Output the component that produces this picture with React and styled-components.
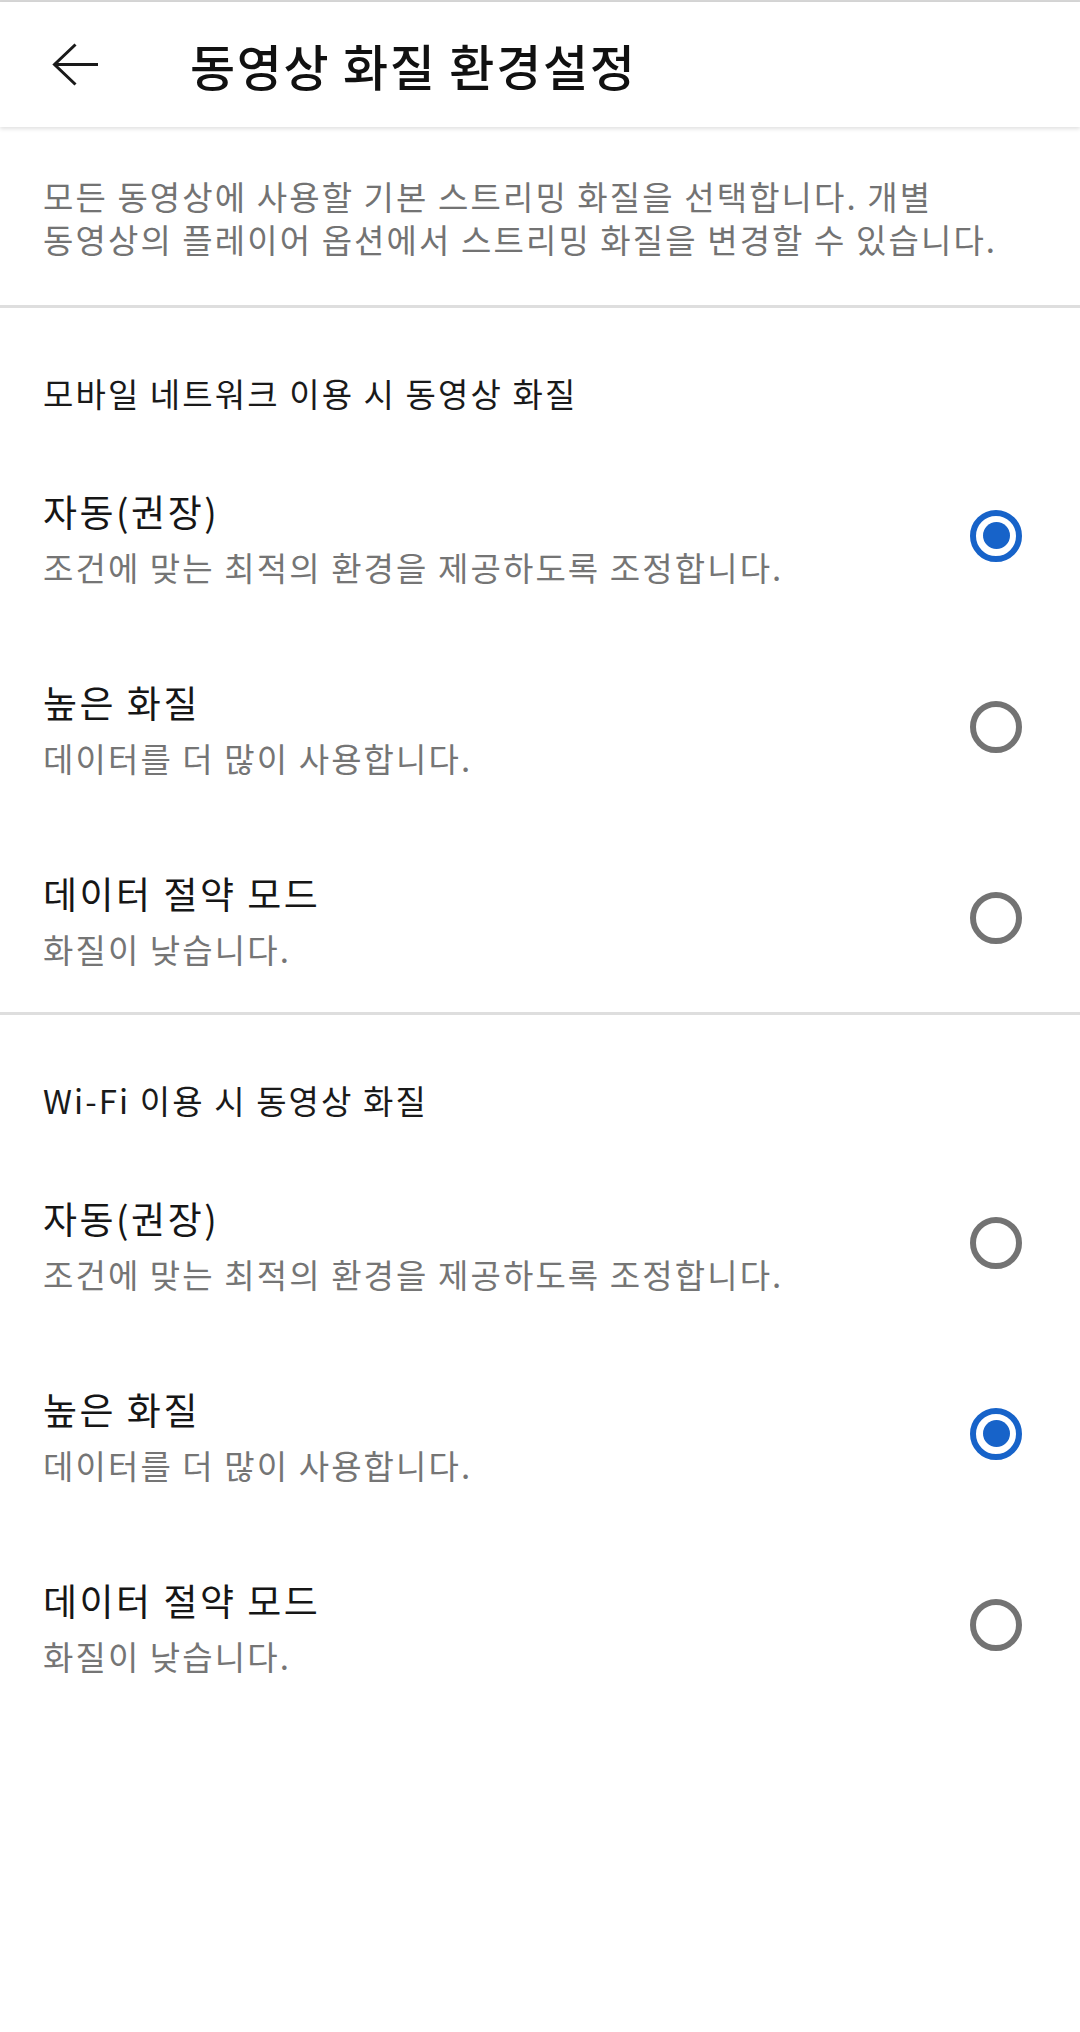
import React from "react";
import styled, { createGlobalStyle } from "styled-components";

const GlobalStyle = createGlobalStyle`
  html, body {
    margin: 0;
    padding: 0;
    background: #ffffff;
  }
  body {
    font-family: "Noto Sans CJK KR", "Noto Sans", sans-serif;
    color: #212121;
    word-break: keep-all;
    -webkit-font-smoothing: antialiased;
  }
  * { box-sizing: border-box; }
`;

const Page = styled.div`
  width: 1080px;
  min-height: 2032px;
  background: #ffffff;
  border-top: 2px solid #d6d6d6;
`;

const Header = styled.header`
  position: relative;
  z-index: 1;
  height: 125px;
  display: flex;
  align-items: center;
  background: #ffffff;
  box-shadow: 0 2px 4px rgba(0, 0, 0, 0.12);
`;

const BackButton = styled.button`
  width: 190px;
  height: 100%;
  border: 0;
  background: none;
  padding: 0 0 0 52px;
  display: flex;
  align-items: center;
  cursor: pointer;
`;

const Title = styled.h1`
  margin: 0;
  font-size: 49px;
  font-weight: 500;
  line-height: 60px;
  color: #111111;
  letter-spacing: 1.7px;
`;

const Description = styled.p`
  margin: 0;
  padding: 48px 40px 44px 43px;
  font-size: 33px;
  line-height: 43px;
  color: #737373;
  letter-spacing: 2.1px;
  word-break: keep-all;
`;

const Divider = styled.div`
  height: 3px;
  background: #dedede;
`;

const SectionTitle = styled.h2`
  margin: 0;
  height: 131px;
  padding: 63px 43px 0 43px;
  font-size: 33px;
  font-weight: 400;
  line-height: 44px;
  color: #1a1a1a;
  letter-spacing: 2.1px;
`;

const Option = styled.label`
  height: 191px;
  display: flex;
  align-items: center;
  justify-content: space-between;
  padding: 0 58px 0 43px;
  cursor: pointer;
`;

const OptionText = styled.div`
  align-self: flex-start;
  padding-top: 47px;
  display: flex;
  flex-direction: column;
  gap: 8px;
`;

const OptionTitle = styled.div`
  font-size: 37px;
  line-height: 50px;
  color: #161616;
  letter-spacing: 2.5px;
`;

const OptionSub = styled.div`
  font-size: 33px;
  line-height: 46px;
  color: #757575;
  letter-spacing: 2.1px;
`;

const Radio = styled.span`
  width: 52px;
  height: 52px;
  border-radius: 50%;
  border: 6px solid ${(p) => (p.$checked ? "#1763c9" : "#737373")};
  display: flex;
  align-items: center;
  justify-content: center;
  flex-shrink: 0;
  margin-top: 2px;

  &::after {
    content: "";
    width: 27px;
    height: 27px;
    border-radius: 50%;
    background: #1763c9;
    display: ${(p) => (p.$checked ? "block" : "none")};
  }
`;

const BackArrow = () => (
  <svg width="48" height="44" viewBox="0 0 48 44" fill="none">
    <path
      d="M46 21.5H3M23.5 1.5L2.5 21.5L23.5 41.5"
      stroke="#1a1a1a"
      strokeWidth="3"
      strokeLinecap="butt"
      strokeLinejoin="miter"
    />
  </svg>
);

const options = [
  { title: "자동(권장)", sub: "조건에 맞는 최적의 환경을 제공하도록 조정합니다." },
  { title: "높은 화질", sub: "데이터를 더 많이 사용합니다." },
  { title: "데이터 절약 모드", sub: "화질이 낮습니다." },
];

const Section = ({ heading, selected }) => (
  <section>
    <SectionTitle>{heading}</SectionTitle>
    {options.map((o, i) => (
      <Option key={o.title}>
        <OptionText>
          <OptionTitle>{o.title}</OptionTitle>
          <OptionSub>{o.sub}</OptionSub>
        </OptionText>
        <Radio $checked={i === selected} />
      </Option>
    ))}
  </section>
);

export default function App() {
  return (
    <>
      <GlobalStyle />
      <Page>
        <Header>
          <BackButton aria-label="뒤로">
            <BackArrow />
          </BackButton>
          <Title>동영상 화질 환경설정</Title>
        </Header>
        <Description>
          모든 동영상에 사용할 기본 스트리밍 화질을 선택합니다. 개별 동영상의
          플레이어 옵션에서 스트리밍 화질을 변경할 수 있습니다.
        </Description>
        <Divider />
        <Section heading="모바일 네트워크 이용 시 동영상 화질" selected={0} />
        <Divider />
        <Section heading="Wi-Fi 이용 시 동영상 화질" selected={1} />
      </Page>
    </>
  );
}
